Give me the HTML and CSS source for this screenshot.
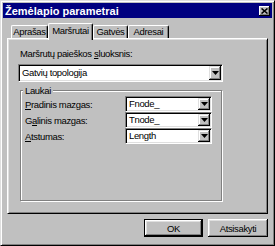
FILE: index.html
```html
<!DOCTYPE html>
<html lang="lt">
<head>
    <meta charset="UTF-8">
    <title>Žemėlapio parametrai</title>
    <link rel="stylesheet" href="styles.css">
</head>
<body>
    <div class="window">
        <div class="titlebar">
            <span class="title">Žemėlapio parametrai</span>
            <span class="close">
                <svg width="7" height="6" viewBox="0 0 7 6"><path d="M0.5 0.5L6.5 5.5M6.5 0.5L0.5 5.5" stroke="#000" stroke-width="1.6"/></svg>
            </span>
        </div>
        <div class="content">
            <div class="tabs">
                <div class="tab tab-1">Aprašas</div>
                <div class="tab tab-2 active">Maršrutai</div>
                <div class="tab tab-3">Gatvės</div>
                <div class="tab tab-4">Adresai</div>
            </div>
            <div class="panel">
                <div class="field-label">Maršrutų paieškos <u>s</u>luoksnis:</div>
                <div class="combo combo-wide">
                    <span class="value">Gatvių topologija</span>
                    <span class="arrow"><svg width="7" height="4" viewBox="0 0 7 4"><path d="M0 0h7l-3.5 4z"/></svg></span>
                </div>
                <fieldset class="group">
                    <legend>Laukai</legend>
                    <div class="row">
                        <span class="row-label"><u>P</u>radinis mazgas:</span>
                        <div class="combo combo-small">
                            <span class="value">Fnode_</span>
                            <span class="arrow"><svg width="7" height="4" viewBox="0 0 7 4"><path d="M0 0h7l-3.5 4z"/></svg></span>
                        </div>
                    </div>
                    <div class="row">
                        <span class="row-label">G<u>a</u>linis mazgas:</span>
                        <div class="combo combo-small">
                            <span class="value">Tnode_</span>
                            <span class="arrow"><svg width="7" height="4" viewBox="0 0 7 4"><path d="M0 0h7l-3.5 4z"/></svg></span>
                        </div>
                    </div>
                    <div class="row">
                        <span class="row-label"><u>A</u>tstumas:</span>
                        <div class="combo combo-small">
                            <span class="value">Length</span>
                            <span class="arrow"><svg width="7" height="4" viewBox="0 0 7 4"><path d="M0 0h7l-3.5 4z"/></svg></span>
                        </div>
                    </div>
                </fieldset>
            </div>
            <div class="buttons">
                <button class="btn btn-ok">OK</button>
                <button class="btn btn-cancel">Atsisakyti</button>
            </div>
        </div>
    </div>
</body>
</html>
```

FILE: styles.css
```css
* {
    box-sizing: border-box;
}
body {
    margin: 0;
    background-color: #c0c0c0;
    font-family: "Liberation Sans", Arial, sans-serif;
    font-size: 9.5px;
    letter-spacing: -0.35px;
    color: #000;
}
.window {
    width: 275px;
    height: 246px;
    border: 1px solid;
    border-color: #dfdfdf #000 #000 #dfdfdf;
    box-shadow: inset 1px 1px #fff, inset -1px -1px #808080;
    padding: 2px;
}
.titlebar {
    display: flex;
    align-items: center;
    justify-content: space-between;
    height: 15px;
    padding: 0 2px;
    background-color: #000080;
    color: #fff;
}
.title {
    font-weight: bold;
    font-size: 11px;
    letter-spacing: 0;
}
.close {
    display: flex;
    align-items: center;
    justify-content: center;
    width: 11px;
    height: 10px;
    background-color: #c0c0c0;
    box-shadow: inset -1px -1px #000, inset 1px 1px #fff, inset -2px -2px #808080;
}
.content {
    padding: 5px 4px 0;
}
.tabs {
    display: flex;
    align-items: flex-end;
    height: 15px;
    padding-left: 4px;
}
.tab {
    height: 13px;
    line-height: 11px;
    text-align: center;
    border: 1px solid;
    border-bottom: none;
    border-color: #fff #000 #000 #fff;
    border-radius: 2px 2px 0 0;
    box-shadow: inset -1px 0 #808080;
}
.tab-1 { width: 37px; }
.tab-2 { width: 45px; }
.tab-3 { width: 35px; }
.tab-4 { width: 41px; }
.tab.active {
    height: 17px;
    margin-bottom: -2px;
    position: relative;
    z-index: 1;
    background-color: #c0c0c0;
    line-height: 13px;
}
.panel {
    height: 176px;
    border: 1px solid;
    border-color: #fff #000 #000 #fff;
    box-shadow: inset 1px 1px #dfdfdf, inset -1px -1px #808080;
    padding: 9px 0 0 10px;
}
.field-label {
    line-height: 12px;
    padding-left: 2px;
}
.combo {
    display: flex;
    padding: 1px;
    background-color: #fff;
    border: 1px solid;
    border-color: #808080 #fff #fff #808080;
    box-shadow: inset 1px 1px #000, inset -1px -1px #dfdfdf;
}
.combo-wide {
    width: 205px;
    height: 18px;
    margin-top: 4px;
}
.combo-small {
    width: 87px;
    height: 16px;
}
.value {
    flex: 1;
    padding-left: 2px;
    line-height: 14px;
}
.combo-small .value {
    line-height: 12px;
}
.arrow {
    display: flex;
    align-items: center;
    justify-content: center;
    width: 12px;
    background-color: #c0c0c0;
    box-shadow: inset -1px -1px #000, inset 1px 1px #dfdfdf, inset -2px -2px #808080, inset 2px 2px #fff;
}
.group {
    width: 202px;
    margin: 3px 0 0 2px;
    padding: 0 4px 56px;
    border: 1px solid #808080;
    box-shadow: 1px 1px #fff, inset 1px 1px #fff;
}
.group legend {
    margin-left: -2px;
    padding: 0 2px;
    line-height: 11px;
    background-color: #c0c0c0;
}
.row {
    display: flex;
    align-items: center;
    height: 16px;
}
.row-label {
    width: 100px;
}
.buttons {
    display: flex;
    justify-content: flex-end;
    gap: 5px;
    margin-top: 5px;
}
.btn {
    height: 18px;
    padding: 0;
    font: inherit;
    letter-spacing: inherit;
    color: #000;
    background-color: #c0c0c0;
    border: none;
    box-shadow: inset -1px -1px #000, inset 1px 1px #fff, inset -2px -2px #808080, inset 2px 2px #dfdfdf;
}
.btn-ok {
    width: 59px;
    border: 1px solid #000;
}
.btn-cancel {
    width: 60px;
}
```
